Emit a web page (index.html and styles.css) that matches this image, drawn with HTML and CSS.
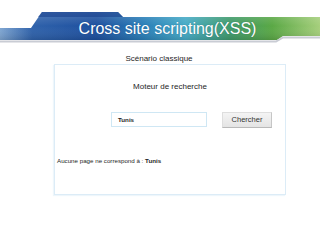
FILE: index.html
```html
<!DOCTYPE html>
<html lang="fr">
<head>
<meta charset="utf-8">
<link rel="stylesheet" href="styles.css">
</head>
<body>
<div class="slide">
  <div class="banner">
    <svg class="banner-art" width="320" height="45" viewBox="0 0 320 45">
      <defs>
        <linearGradient id="g" x1="0" y1="0" x2="1" y2="0">
          <stop offset="0" stop-color="#7fa6d2"/>
          <stop offset="0.1" stop-color="#2f62ab"/>
          <stop offset="0.3" stop-color="#1d4f9e"/>
          <stop offset="0.45" stop-color="#2a7fb8"/>
          <stop offset="0.58" stop-color="#45aac6"/>
          <stop offset="0.72" stop-color="#3f9a6a"/>
          <stop offset="0.85" stop-color="#5aa845"/>
          <stop offset="1" stop-color="#a6cf7c"/>
        </linearGradient>
        <linearGradient id="v" x1="0" y1="0" x2="0" y2="1">
          <stop offset="0" stop-color="#ffffff" stop-opacity="0.18"/>
          <stop offset="0.5" stop-color="#ffffff" stop-opacity="0"/>
          <stop offset="1" stop-color="#000000" stop-opacity="0.12"/>
        </linearGradient>
      </defs>
      <path d="M0,28 L31,28 L42,12 L118,12 L123,17 L320,17 L320,36 L283,36 L277,40 L0,40 Z" fill="url(#g)"/>
      <path d="M0,28 L31,28 L42,12 L118,12 L123,17 L320,17 L320,36 L283,36 L277,40 L0,40 Z" fill="url(#v)"/>
      <path d="M42,12 L118,12 L123,17 L38,17 Z" fill="#173f8c" opacity="0.6"/>
      <path d="M0,41.5 L276,41.5 L283,37.5 L320,37.5" fill="none" stroke="#c9ccd4" stroke-width="2"/>
    </svg>
    <h1 class="title">Cross site scripting(XSS)</h1>
  </div>
  <p class="subtitle">Scénario classique</p>
  <div class="panel">
    <p class="panel-title">Moteur de recherche</p>
    <div class="search-row">
      <div class="search-input">Tunis</div>
      <div class="search-btn">Chercher</div>
    </div>
    <p class="result">Aucune page ne correspond à : <b>Tunis</b></p>
  </div>
</div>
</body>
</html>
```

FILE: styles.css
```css
html, body {
  margin: 0;
  padding: 0;
  background: #ffffff;
}
body {
  font-family: "Liberation Sans", Arial, sans-serif;
  color: #1e1e1e;
}
.slide {
  width: 320px;
  height: 240px;
  overflow: hidden;
  display: flex;
  flex-direction: column;
}
.banner {
  display: grid;
  height: 45px;
}
.banner-art {
  grid-area: 1 / 1;
  display: block;
}
.title {
  grid-area: 1 / 1;
  align-self: start;
  margin: 21px 0 0 0;
  padding-left: 15px;
  text-align: center;
  font-size: 16px;
  line-height: 16px;
  font-weight: normal;
  color: #ffffff;
  text-shadow: 0 0 1px rgba(0, 40, 90, 0.4);
}
.subtitle {
  margin: 9px 0 0 0;
  padding-right: 2px;
  text-align: center;
  font-size: 8px;
  line-height: 10px;
}
.panel {
  margin-left: 54px;
  width: 230px;
  height: 129px;
  border: 1px solid #dcecf7;
  box-shadow: -1px 1px 1px #eef6fb;
  display: flex;
  flex-direction: column;
}
.panel-title {
  margin: 17px 0 0 0;
  text-align: center;
  font-size: 8px;
  line-height: 10px;
}
.search-row {
  display: flex;
  gap: 15px;
  margin: 20px 0 0 56px;
}
.search-input {
  box-sizing: border-box;
  width: 96px;
  height: 15px;
  border: 1px solid #cfe7f4;
  padding-left: 6px;
  font-size: 6.2px;
  line-height: 13px;
  font-weight: bold;
}
.search-btn {
  box-sizing: border-box;
  width: 50px;
  height: 16px;
  border: 1px solid #dedede;
  border-bottom-color: #b9b9b9;
  border-right-color: #c6c6c6;
  background: linear-gradient(#f4f4f4, #e4e4e4);
  text-align: center;
  font-size: 7.5px;
  line-height: 13px;
  color: #333;
}
.result {
  margin: 29px 0 0 2px;
  font-size: 6.2px;
  line-height: 8px;
}
.result b {
  font-weight: bold;
}
```
